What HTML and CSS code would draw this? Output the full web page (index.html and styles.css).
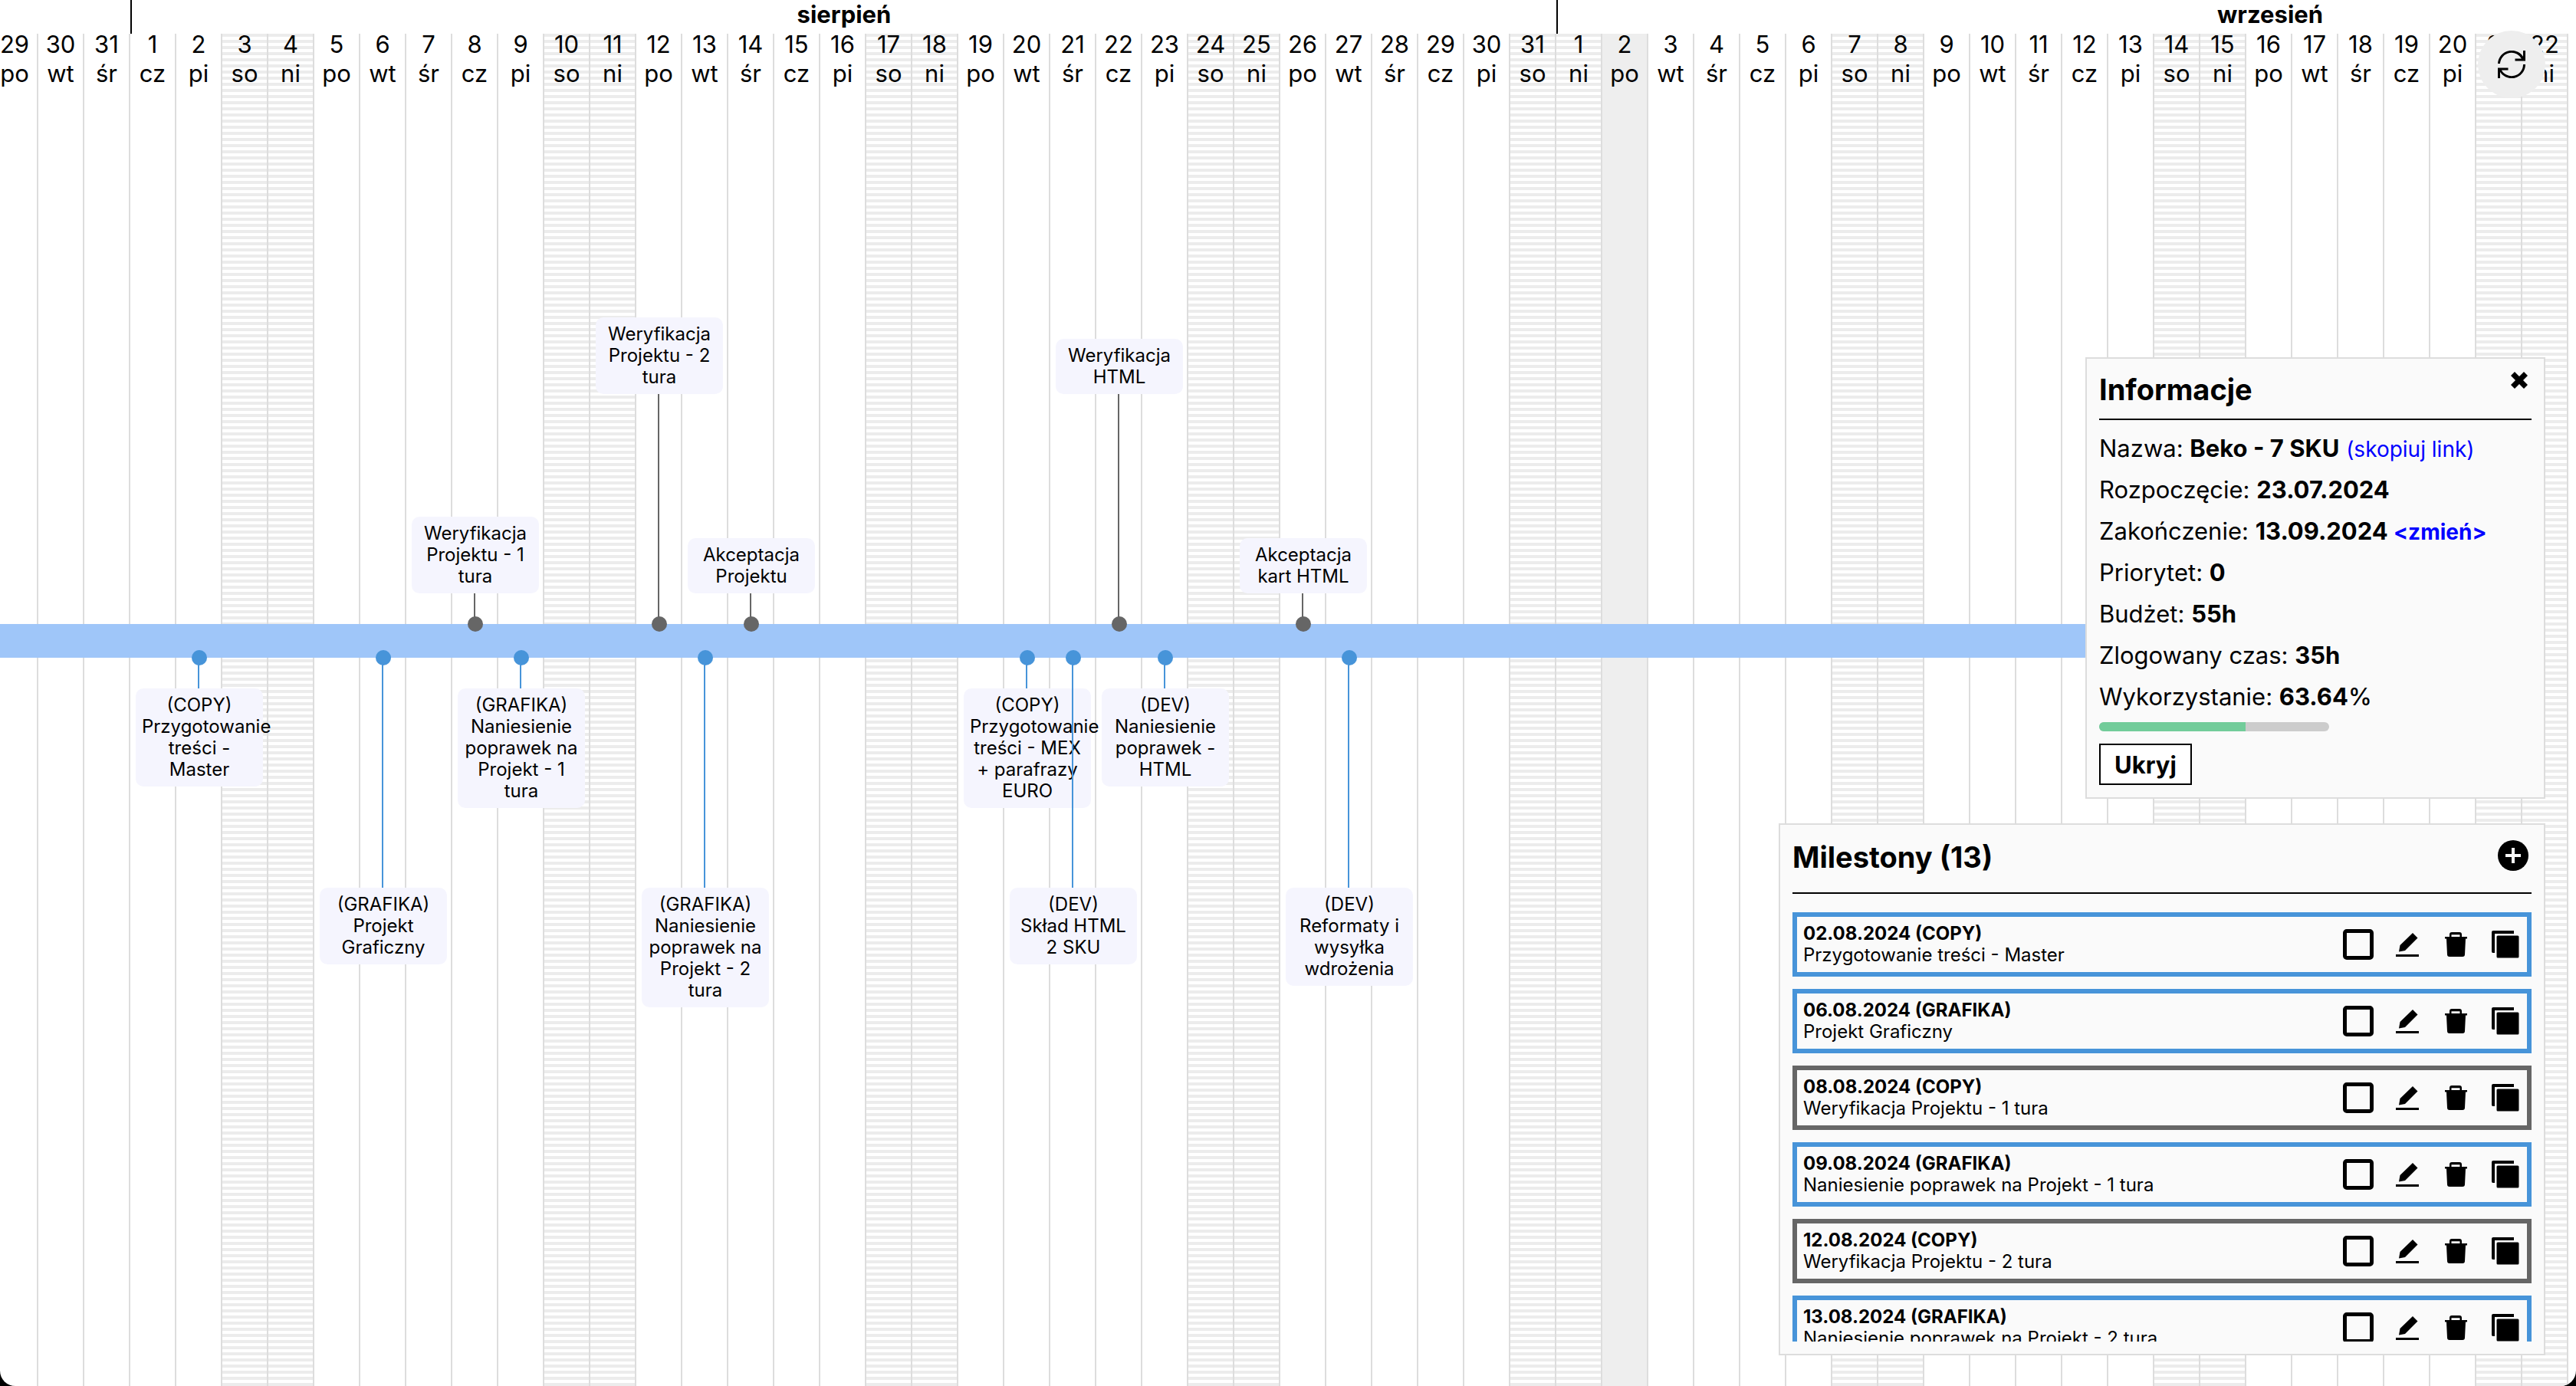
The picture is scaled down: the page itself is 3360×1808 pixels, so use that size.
FILE: index.html
```
<!DOCTYPE html>
<html lang="pl">
<head>
<meta charset="utf-8">
<title>Harmonogram</title>
<link rel="stylesheet" href="styles.css">
</head>
<body>
<svg class="sprite" aria-hidden="true">
  <symbol id="i-edit" viewBox="0 0 32 32"><path d="M23 1l6.500 6.500L13 24l-8 1.500L6.500 17zM1 29h30v3H1z"/></symbol>
  <symbol id="i-trash" viewBox="0 0 32 32"><path d="M7 6V3q0-3 3-3h10q3 0 3 3v3h7v2.500h-2L27 29q0 3-3 3H7q-3 0-3-3L3 8.500H1V6zm2.500 0h11V3.200h-11z"/></symbol>
  <symbol id="i-copy" viewBox="0 0 36 36"><path d="M0 2q0-2 2-2h27v4H4v25H1.500Q0 29 0 27zM6.500 8q0-1.500 1.500-1.500h26q1.500 0 1.500 1.500v26q0 1.500-1.500 1.500H8q-1.500 0-1.500-1.500z"/></symbol>
</svg>
<main class="app">
  <section class="timeline">
    <header class="months">
      <div class="month month-past"></div>
      <div class="month">sierpień</div>
      <div class="month">wrzesień</div>
    </header>
    <div class="days">
      <div class="day">29<br>po</div>
      <div class="day">30<br>wt</div>
      <div class="day">31<br>śr</div>
      <div class="day">1<br>cz</div>
      <div class="day">2<br>pi</div>
      <div class="day off">3<br>so</div>
      <div class="day off">4<br>ni</div>
      <div class="day">5<br>po</div>
      <div class="day">6<br>wt</div>
      <div class="day">7<br>śr</div>
      <div class="day">8<br>cz</div>
      <div class="day">9<br>pi</div>
      <div class="day off">10<br>so</div>
      <div class="day off">11<br>ni</div>
      <div class="day">12<br>po</div>
      <div class="day">13<br>wt</div>
      <div class="day">14<br>śr</div>
      <div class="day">15<br>cz</div>
      <div class="day">16<br>pi</div>
      <div class="day off">17<br>so</div>
      <div class="day off">18<br>ni</div>
      <div class="day">19<br>po</div>
      <div class="day">20<br>wt</div>
      <div class="day">21<br>śr</div>
      <div class="day">22<br>cz</div>
      <div class="day">23<br>pi</div>
      <div class="day off">24<br>so</div>
      <div class="day off">25<br>ni</div>
      <div class="day">26<br>po</div>
      <div class="day">27<br>wt</div>
      <div class="day">28<br>śr</div>
      <div class="day">29<br>cz</div>
      <div class="day">30<br>pi</div>
      <div class="day off">31<br>so</div>
      <div class="day off">1<br>ni</div>
      <div class="day today">2<br>po</div>
      <div class="day">3<br>wt</div>
      <div class="day">4<br>śr</div>
      <div class="day">5<br>cz</div>
      <div class="day">6<br>pi</div>
      <div class="day off">7<br>so</div>
      <div class="day off">8<br>ni</div>
      <div class="day">9<br>po</div>
      <div class="day">10<br>wt</div>
      <div class="day">11<br>śr</div>
      <div class="day">12<br>cz</div>
      <div class="day">13<br>pi</div>
      <div class="day off">14<br>so</div>
      <div class="day off">15<br>ni</div>
      <div class="day">16<br>po</div>
      <div class="day">17<br>wt</div>
      <div class="day">18<br>śr</div>
      <div class="day">19<br>cz</div>
      <div class="day">20<br>pi</div>
      <div class="day off">21<br>so</div>
      <div class="day off">22<br>ni</div>
    </div>
    <div class="project-bar">
      <div class="pin up near" style="--day:10"><p class="note">Weryfikacja Projektu - 1 tura</p></div>
      <div class="pin up far" style="--day:14"><p class="note">Weryfikacja Projektu - 2 tura</p></div>
      <div class="pin up near" style="--day:16"><p class="note">Akceptacja Projektu</p></div>
      <div class="pin up far" style="--day:24"><p class="note">Weryfikacja HTML</p></div>
      <div class="pin up near" style="--day:28"><p class="note">Akceptacja kart HTML</p></div>
      <div class="pin down near" style="--day:4"><p class="note">(COPY) Przygotowanie treści - Master</p></div>
      <div class="pin down far" style="--day:8"><p class="note">(GRAFIKA) Projekt Graficzny</p></div>
      <div class="pin down near" style="--day:11"><p class="note">(GRAFIKA) Naniesienie poprawek na Projekt - 1 tura</p></div>
      <div class="pin down far" style="--day:15"><p class="note">(GRAFIKA) Naniesienie poprawek na Projekt - 2 tura</p></div>
      <div class="pin down near" style="--day:22"><p class="note">(COPY) Przygotowanie treści - MEX + parafrazy EURO</p></div>
      <div class="pin down far" style="--day:23"><p class="note">(DEV)<br>Skład HTML 2 SKU</p></div>
      <div class="pin down near" style="--day:25"><p class="note">(DEV) Naniesienie poprawek - HTML</p></div>
      <div class="pin down far" style="--day:29"><p class="note">(DEV) Reformaty i wysyłka wdrożenia</p></div>
    </div>
  </section>

  <button class="refresh" type="button" aria-label="Odśwież">
    <svg width="36" height="36" viewBox="0 0 36 36" fill="none" stroke="#000" stroke-width="3"><path d="M1.500 17A16.500 16.500 0 0 1 33 11M34.500 0v12H22.500M34.500 18A16.500 16.500 0 0 1 3 25M1.500 36V24H13.500"/></svg>
  </button>

  <div class="panels">
    <section class="panel info">
      <header class="panel-head">
        <h2>Informacje</h2>
        <button class="icon-btn close" type="button" aria-label="Zamknij">
          <svg width="22" height="22" viewBox="0 0 22 22"><path d="M5 0l6 6 6-6 5 5-6 6 6 6-5 5-6-6-6 6-5-5 6-6-6-6z"/></svg>
        </button>
      </header>
      <div class="facts">
        <p>Nazwa: <b>Beko - 7 SKU</b> <a href="#link">(skopiuj link)</a></p>
        <p>Rozpoczęcie: <b>23.07.2024</b></p>
        <p>Zakończenie: <b>13.09.2024 <a href="#zmien">&lt;zmień&gt;</a></b></p>
        <p>Priorytet: <b>0</b></p>
        <p>Budżet: <b>55h</b></p>
        <p>Zlogowany czas: <b>35h</b></p>
        <p>Wykorzystanie: <b>63.64</b><span class="medium">%</span></p>
      </div>
      <div class="meter"><div class="meter-fill" style="width:63.64%"></div></div>
      <button class="hide-btn" type="button">Ukryj</button>
    </section>

    <section class="panel milestones">
      <header class="panel-head">
        <h2>Milestony (13)</h2>
        <button class="icon-btn" type="button" aria-label="Dodaj milestone">
          <svg width="40" height="40" viewBox="0 0 40 40"><circle cx="20" cy="20" r="20"/><path d="M20 10v20M10 20h20" stroke="#fafafa" stroke-width="4"/></svg>
        </button>
      </header>
      <ul class="cards">
        <li class="card">
          <div class="card-text"><b>02.08.2024 (COPY)</b><p>Przygotowanie treści - Master</p></div>
          <input type="checkbox" aria-label="Wykonane: 02.08.2024">
          <button class="icon-btn" type="button" aria-label="Edytuj"><svg width="32" height="32"><use href="#i-edit"/></svg></button>
          <button class="icon-btn" type="button" aria-label="Usuń"><svg width="32" height="32"><use href="#i-trash"/></svg></button>
          <button class="icon-btn" type="button" aria-label="Kopiuj"><svg width="36" height="36"><use href="#i-copy"/></svg></button>
        </li>
        <li class="card">
          <div class="card-text"><b>06.08.2024 (GRAFIKA)</b><p>Projekt Graficzny</p></div>
          <input type="checkbox" aria-label="Wykonane: 06.08.2024">
          <button class="icon-btn" type="button" aria-label="Edytuj"><svg width="32" height="32"><use href="#i-edit"/></svg></button>
          <button class="icon-btn" type="button" aria-label="Usuń"><svg width="32" height="32"><use href="#i-trash"/></svg></button>
          <button class="icon-btn" type="button" aria-label="Kopiuj"><svg width="36" height="36"><use href="#i-copy"/></svg></button>
        </li>
        <li class="card client">
          <div class="card-text"><b>08.08.2024 (COPY)</b><p>Weryfikacja Projektu - 1 tura</p></div>
          <input type="checkbox" aria-label="Wykonane: 08.08.2024">
          <button class="icon-btn" type="button" aria-label="Edytuj"><svg width="32" height="32"><use href="#i-edit"/></svg></button>
          <button class="icon-btn" type="button" aria-label="Usuń"><svg width="32" height="32"><use href="#i-trash"/></svg></button>
          <button class="icon-btn" type="button" aria-label="Kopiuj"><svg width="36" height="36"><use href="#i-copy"/></svg></button>
        </li>
        <li class="card">
          <div class="card-text"><b>09.08.2024 (GRAFIKA)</b><p>Naniesienie poprawek na Projekt - 1 tura</p></div>
          <input type="checkbox" aria-label="Wykonane: 09.08.2024">
          <button class="icon-btn" type="button" aria-label="Edytuj"><svg width="32" height="32"><use href="#i-edit"/></svg></button>
          <button class="icon-btn" type="button" aria-label="Usuń"><svg width="32" height="32"><use href="#i-trash"/></svg></button>
          <button class="icon-btn" type="button" aria-label="Kopiuj"><svg width="36" height="36"><use href="#i-copy"/></svg></button>
        </li>
        <li class="card client">
          <div class="card-text"><b>12.08.2024 (COPY)</b><p>Weryfikacja Projektu - 2 tura</p></div>
          <input type="checkbox" aria-label="Wykonane: 12.08.2024">
          <button class="icon-btn" type="button" aria-label="Edytuj"><svg width="32" height="32"><use href="#i-edit"/></svg></button>
          <button class="icon-btn" type="button" aria-label="Usuń"><svg width="32" height="32"><use href="#i-trash"/></svg></button>
          <button class="icon-btn" type="button" aria-label="Kopiuj"><svg width="36" height="36"><use href="#i-copy"/></svg></button>
        </li>
        <li class="card">
          <div class="card-text"><b>13.08.2024 (GRAFIKA)</b><p>Naniesienie poprawek na Projekt - 2 tura</p></div>
          <input type="checkbox" aria-label="Wykonane: 13.08.2024">
          <button class="icon-btn" type="button" aria-label="Edytuj"><svg width="32" height="32"><use href="#i-edit"/></svg></button>
          <button class="icon-btn" type="button" aria-label="Usuń"><svg width="32" height="32"><use href="#i-trash"/></svg></button>
          <button class="icon-btn" type="button" aria-label="Kopiuj"><svg width="36" height="36"><use href="#i-copy"/></svg></button>
        </li>
      </ul>
    </section>
  </div>
</main>
</body>
</html>
```
FILE: styles.css
```
:root {
  --line: #ddd;
  --stripe: #ececec;
  --team: #4794d9;
  --client: #666;
  --panel: #fafafa;
}

* { box-sizing: border-box; }

body {
  margin: 0;
  background: #000;
  color: #000;
  font-family: Inter, "Liberation Sans", sans-serif;
  font-size: 31px;
}

p, h2, ul { margin: 0; padding: 0; }
b, h2 { font-weight: 700; }
svg { display: block; }
.sprite { position: absolute; width: 0; height: 0; }

.app {
  position: relative;
  height: 100vh;
  overflow: hidden;
  background: #fff;
  border-radius: 0 0 20px 20px;
}

/* Calendar */
.timeline {
  position: relative;
  display: flex;
  flex-direction: column;
  height: 100%;
  margin-left: -10px;
}

.months { display: flex; height: 44px; }
.month {
  flex: none;
  width: 1860px;
  border-left: 2px solid #000;
  text-align: center;
  font-weight: 700;
  line-height: 38px;
}
.month-past { width: 180px; border-left: 0; }

.days { display: flex; flex: 1; }
.day {
  flex: none;
  width: 60px;
  border-right: 2px solid var(--line);
  text-align: center;
  line-height: 38px;
}
/* pulls the date up to the top edge of its column */
.day::before {
  content: "";
  display: block;
  margin-top: -5px;
}
.off { background: repeating-linear-gradient(var(--stripe) 0 4px, #fff 4px 8px); }
.today { background: #eee; }

/* Project bar with milestone pins */
.project-bar {
  position: absolute;
  top: 814px;
  left: 0;
  width: calc(47 * 60px);
  height: 44px;
  background: #9fc6f9;
}
.pin {
  position: absolute;
  left: calc(var(--day) * 60px + 30px);
  width: 0;
  --reach: 40px;
  --tone: var(--team);
}
.far { --reach: 300px; }
.up { top: 0; --tone: var(--client); }
.down { bottom: 0; }
.pin::before {
  content: "";
  position: absolute;
  left: -2px;
  width: 2px;
  height: var(--reach);
  background: var(--tone);
}
.pin::after {
  content: "";
  position: absolute;
  left: -10px;
  top: -10px;
  width: 20px;
  height: 20px;
  border-radius: 50%;
  background: var(--tone);
}
.up::before { bottom: 0; }
.down::before { top: 0; }
.note {
  position: absolute;
  left: -83px;
  width: 166px;
  padding: 8px;
  border-radius: 10px;
  background: #f5f5fe;
  text-align: center;
  font-size: 24px;
  line-height: 28px;
}
.up .note { bottom: var(--reach); }
.down .note { top: var(--reach); }

/* Controls */
button { font: inherit; color: inherit; cursor: pointer; }
.icon-btn {
  display: grid;
  place-items: center;
  padding: 0;
  border: 0;
  background: none;
}
.refresh {
  position: absolute;
  top: 40px;
  right: 40px;
  display: grid;
  place-items: center;
  width: 88px;
  height: 88px;
  padding: 0;
  border: 0;
  border-radius: 50%;
  background: #eee;
}

/* Floating panels */
.panels {
  position: absolute;
  right: 40px;
  bottom: 40px;
  display: flex;
  flex-direction: column;
  align-items: flex-end;
  gap: 32px;
}
.panel {
  background: var(--panel);
  border: 2px solid var(--line);
  padding: 16px;
}
.info { width: 600px; }
.milestones { width: 1000px; }

.panel-head {
  display: flex;
  justify-content: space-between;
  align-items: flex-start;
  height: 64px;
  border-bottom: 2px solid #000;
}
.panel-head h2 { font-size: 38px; line-height: 48px; }
.close { padding: 1px 5px; }

.facts { padding-top: 10px; }
.facts p { line-height: 54px; }
.facts a { color: #00f; text-decoration: none; font-size: 28px; line-height: 28px; }
.medium { font-weight: 500; }

.meter {
  width: 300px;
  height: 12px;
  margin: 6px 0 16px;
  border-radius: 6px;
  background: #ccc;
  overflow: hidden;
}
.meter-fill { height: 100%; background: #72cc9a; }
.hide-btn {
  height: 54px;
  padding: 0 18px;
  border: 2px solid #000;
  background: #fff;
  font-weight: 700;
}

.milestones .panel-head { height: 74px; padding: 2px 4px 0 0; margin-bottom: 24px; }
.milestones .panel-head .icon-btn { margin-top: 2px; }
.cards {
  display: flex;
  flex-direction: column;
  gap: 16px;
  max-height: 560px;
  overflow: hidden;
  list-style: none;
}
.card {
  flex: none;
  display: flex;
  align-items: center;
  height: 84px;
  padding: 0 8px;
  border: 6px solid var(--team);
  font-size: 24px;
  line-height: 28px;
}
.client { border-color: var(--client); }
.card-text { flex: 1; }
.card .icon-btn { width: 40px; height: 40px; margin-left: 24px; }
.card input {
  appearance: none;
  width: 40px;
  height: 40px;
  margin: 0;
  border: 5px solid #000;
  border-radius: 5px;
}
```
